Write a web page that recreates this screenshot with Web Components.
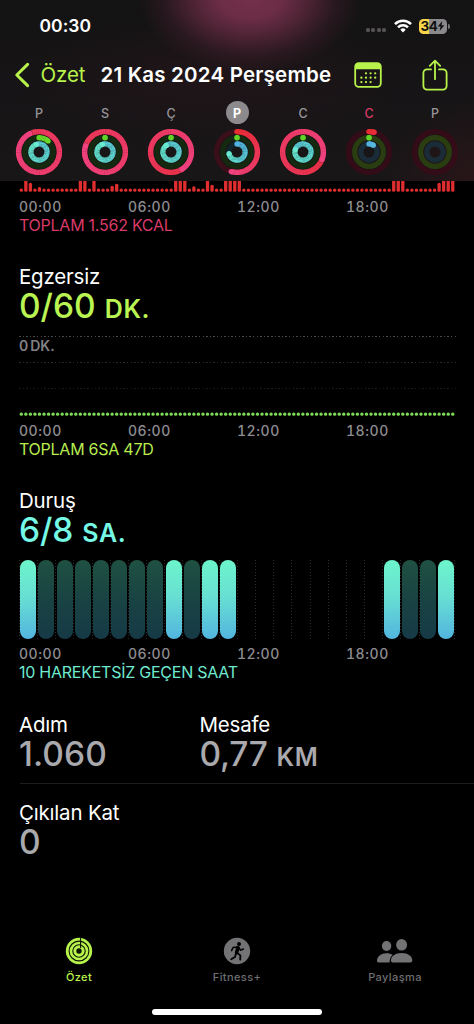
<!DOCTYPE html>
<html lang="tr">
<head>
<meta charset="utf-8">
<meta name="viewport" content="width=device-width, initial-scale=1">
<title>Özet</title>
<style>
    body{
        margin: 0;
        background: #000;
        color: #fff;
        font-family: Inter, "Liberation Sans", sans-serif;
    }
</style>
</head>
<body>
<fitness-app></fitness-app>

<script>
const makeTemplate = (html) => {
    const template = document.createElement('template')
    template.innerHTML = html
    return template
}

class BaseElement extends HTMLElement {
    constructor(){
        super()
        this.attachShadow({ mode: 'open' })
        this.shadowRoot.appendChild(this.constructor.template.content.cloneNode(true))
    }
    $(selector){
        return this.shadowRoot.querySelector(selector)
    }
}

// STATUS BAR
class StatusBar extends BaseElement {
    static template = makeTemplate(`
<style>
    :host{
        display: flex;
        align-items: center;
        height: 52px;
        padding: 0 24.5px 0 39.5px;
        box-sizing: border-box;
    }
    .time{ font-size: 17.5px; font-weight: 600; line-height: 20px; letter-spacing: 0.05px; flex: 1; }
    .signal{ display: flex; gap: 1.5px; margin: 8px 8px 0 0; }
    .signal i{ width: 4px; height: 4px; border-radius: 1.5px; background: #555254; }
    .wifi{ margin-right: 7px; display: block; }
    .battery{
        width: 28px;
        height: 15px;
        border-radius: 4.5px;
        background: linear-gradient(90deg, #f7d548 34%, #8b898b 34%);
        color: #111;
        display: flex;
        align-items: center;
        justify-content: center;
        font-size: 13.5px;
        font-weight: 700;
        letter-spacing: -0.5px;
    }
    .cap{ width: 1.5px; height: 5px; border-radius: 0 2px 2px 0; background: #777577; margin-left: 1px; }
</style>
<span class="time">00:30</span>
<span class="signal"><i></i><i></i><i></i><i></i></span>
<svg class="wifi" width="18" height="14" viewBox="0 0 18 14" fill="none" stroke="#fff" stroke-width="2.6">
    <path d="M1 5.1a11.4 11.4 0 0 1 16 0"/>
    <path d="M4 8.3a7.1 7.1 0 0 1 10 0"/>
    <path d="M9 13.6l-2.7-2.9a3.8 3.8 0 0 1 5.4 0z" fill="#fff" stroke="none"/>
</svg>
<span class="battery">34<svg width="8" height="10" viewBox="0 0 7 10"><path d="M4.8 0L0.2 5.6H3L2.1 10L6.9 4.2H4z" fill="#111"/></svg></span>
<span class="cap"></span>
`)
}

// TOP NAVIGATION
class NavBar extends BaseElement {
    static template = makeTemplate(`
<style>
    :host{
        display: flex;
        align-items: center;
        height: 46px;
        padding: 0 26px 0 14px;
        box-sizing: border-box;
        color: #b8f34b;
    }
    svg{ display: block; fill: none; stroke: currentColor; }
    .back{ font-size: 20.5px; line-height: 26px; width: 60px; margin-left: 10.5px; letter-spacing: -0.1px; }
    .title{ font-size: 20.5px; line-height: 26px; font-weight: 600; color: #fff; flex: 1; white-space: nowrap; letter-spacing: 0.2px; }
    .calendar{ margin-right: 40px; }
</style>
<svg width="16" height="26" viewBox="0 0 16 26" stroke-width="3" stroke-linecap="round" stroke-linejoin="round"><path d="M13.6 2.4L2.8 13L13.6 23.6"/></svg>
<span class="back"><slot name="back"></slot></span>
<span class="title"><slot></slot></span>
<svg class="calendar" width="28" height="26" viewBox="0 0 28 26">
    <rect x="1.2" y="1.2" width="25.6" height="23.6" rx="3.6" stroke-width="1.8"/>
    <path d="M1 7.2V5a4 4 0 0 1 4-4h18a4 4 0 0 1 4 4v2.2z" fill="currentColor" stroke="none"/>
    <g fill="currentColor" stroke="none">
        <circle cx="12" cy="11.3" r="1.15"/><circle cx="16.6" cy="11.3" r="1.15"/><circle cx="21.2" cy="11.3" r="1.15"/>
        <circle cx="7.4" cy="15.7" r="1.15"/><circle cx="12" cy="15.7" r="1.15"/><circle cx="16.6" cy="15.7" r="1.15"/><circle cx="21.2" cy="15.7" r="1.15"/>
        <circle cx="7.4" cy="20.1" r="1.15"/><circle cx="12" cy="20.1" r="1.15"/><circle cx="16.6" cy="20.1" r="1.15"/>
    </g>
</svg>
<svg width="26" height="32" viewBox="0 0 26 32" stroke-width="1.8" stroke-linecap="round" stroke-linejoin="round">
    <path d="M9 10.4H5a3.6 3.6 0 0 0-3.6 3.6v13a3.6 3.6 0 0 0 3.6 3.6h16a3.6 3.6 0 0 0 3.6-3.6V14a3.6 3.6 0 0 0-3.6-3.6h-4"/>
    <path d="M13 20.2V1.8M7.8 6.8L13 1.6l5.2 5.2"/>
</svg>
`)
}

// ONE DAY OF THE WEEK STRIP, rings are fractions of their goal
class DayRings extends BaseElement {
    static template = makeTemplate(`
<style>
    :host{ display: flex; flex-direction: column; align-items: center; color: #98969a; }
    :host([today]){ color: #d93a68; }
    :host([selected]){ color: #fff; }
    .label{
        width: 23px;
        height: 23px;
        border-radius: 50%;
        font-size: 12.5px;
        font-weight: 500;
        line-height: 25px;
        text-align: center;
    }
    :host([selected]) .label{ background: #8c8a8c; font-weight: 700; }
    svg{ display: block; margin-top: 4px; }
</style>
<div class="label"><slot></slot></div>
<svg width="48" height="48" viewBox="-24 -24 48 48"></svg>
`)

    connectedCallback(){
        const idle = this.hasAttribute('idle')
        const rings = [
            { name: 'move', r: 20.4, width: 5.4, from: [232, 44, 52], to: [240, 66, 128], track: idle ? '#340c17' : '#3a0f1a' },
            { name: 'exercise', r: 14.3, width: 5.2, from: [98, 212, 40], to: [140, 230, 50], track: idle ? '#2a3d10' : '#14290f' },
            { name: 'stand', r: 8.1, width: 5.2, from: [82, 178, 226], to: [104, 234, 206], track: idle ? '#1a2c38' : '#10242c' }
        ]
        this.$('svg').innerHTML = rings.map((ring) => {
            const value = Number(this.getAttribute(ring.name) || 0)
            return `<circle r="${ring.r}" fill="none" stroke="${ring.track}" stroke-width="${ring.width}"/>` + this.arc(ring, value)
        }).join('')
    }

    point(r, deg){
        const a = (deg - 90) * Math.PI / 180
        return `${(r * Math.cos(a)).toFixed(2)} ${(r * Math.sin(a)).toFixed(2)}`
    }

    // short segments stepping through the colours, starting at 12 o'clock
    arc(ring, value){
        if(value <= 0) return ''
        const end = value * 360
        const start = Math.max(0, end - 359)
        const color = (deg) => {
            const t = deg / Math.max(end, 200)
            return `rgb(${ring.from.map((c, i) => Math.round(c + (ring.to[i] - c) * t)).join()})`
        }
        let out = ''
        for(let deg = start; deg < end; deg += 6){
            const next = Math.min(end, deg + 7)
            out += `<path d="M${this.point(ring.r, deg)}A${ring.r} ${ring.r} 0 0 1 ${this.point(ring.r, next)}" fill="none" stroke="${color(deg)}" stroke-width="${ring.width}"/>`
        }
        const cap = (deg, r, fill) => `<circle r="${r}" fill="${fill}" transform="translate(${this.point(ring.r, deg)})"/>`
        if(value < 1) out += cap(0, ring.width / 2, color(0))
        if(value > 1 && ring.name === 'move') out += cap(end + 3, ring.width / 2 - 0.4, 'rgba(60, 0, 20, 0.4)')
        return out + cap(end, ring.width / 2, color(end))
    }
}

class HourAxis extends BaseElement {
    static template = makeTemplate(`
<style>
    :host{
        display: grid;
        grid-template-columns: 109px 109px 109px 1fr;
        font-size: 14px;
        font-weight: 500;
        font-variant-numeric: tabular-nums;
        line-height: 18px;
        letter-spacing: 0.55px;
        color: #8d8c90;
        margin-top: 6px;
    }
</style>
<span>00:00</span><span>06:00</span><span>12:00</span><span>18:00</span>
`)
}

// TITLE + VALUE
class MetricValue extends BaseElement {
    static template = makeTemplate(`
<style>
    :host{ display: block; color: #a9a9ae; white-space: nowrap; }
    .title{ font-size: 20.5px; line-height: 24px; color: #fff; letter-spacing: -0.2px; }
    .value{ display: flex; align-items: baseline; height: 32px; font-size: 33.5px; line-height: 34px; font-weight: 450; letter-spacing: var(--value-track, 0.1px); }
    .unit{ font-size: 25px; line-height: 20px; font-weight: 600; letter-spacing: 0.6px; margin-left: 9px; }
</style>
<div class="title"></div>
<div class="value"><slot></slot><span class="unit"></span></div>
`)

    connectedCallback(){
        this.$('.title').textContent = this.getAttribute('heading')
        const unit = this.getAttribute('unit')
        if(unit) this.$('.unit').textContent = unit
        else this.$('.unit').remove()
    }
}

class ChartNote extends BaseElement {
    static template = makeTemplate(`
<style>
    :host{ display: block; font-size: 16px; line-height: 19px; white-space: nowrap; letter-spacing: -0.25px; }
</style>
<slot></slot>
`)
}

// 96 QUARTER HOURS, bars="index:height ..."
class QuarterChart extends BaseElement {
    static template = makeTemplate(`
<style>
    :host{ display: block; overflow: hidden; }
    svg{ display: block; }
</style>
<svg width="437" fill="currentColor"></svg>
`)

    connectedCallback(){
        const height = Number(this.getAttribute('height'))
        const step = 436 / 96
        const bars = {}
        ;(this.getAttribute('bars') || '').split(' ').filter(Boolean).forEach((pair) => {
            const [index, size] = pair.split(':')
            bars[index] = Number(size)
        })
        let out = ''
        for(let i = 0; i < 96; i++){
            const h = bars[i] || 3.2
            out += `<rect x="${(i * step + 0.65).toFixed(2)}" y="${height - h - 0.3}" width="3.3" height="${h}" rx="1.5"/>`
        }
        const svg = this.$('svg')
        svg.setAttribute('height', height)
        svg.innerHTML = out
    }
}

// 24 HOURS, one letter each: s stood, i idle, - nothing
class StandChart extends BaseElement {
    static template = makeTemplate(`
<style>
    :host{ display: grid; grid-template-columns: repeat(24, 1fr); width: 436px; height: 79.5px; }
    span{
        box-sizing: border-box;
        padding-left: 1.3px;
        background: repeating-linear-gradient(#2a2a2c 0 1px, transparent 1px 3px) left / 1px 100% no-repeat;
    }
    span:last-child{
        background: repeating-linear-gradient(#2a2a2c 0 1px, transparent 1px 3px) right / 1px 100% no-repeat;
    }
    i{ display: block; width: 16px; height: 100%; border-radius: 8px; }
    .s{ background: linear-gradient(175deg, #6cf5cb, #68e0d2 45%, #52b4df); }
    .i{ background: linear-gradient(#1f5142, #194343 50%, #163a46); }
</style>
`)

    connectedCallback(){
        for(const hour of this.getAttribute('hours')){
            const cell = document.createElement('span')
            if(hour !== '-') cell.innerHTML = `<i class="${hour}"></i>`
            this.shadowRoot.appendChild(cell)
        }
    }
}

class TabItem extends BaseElement {
    static template = makeTemplate(`
<style>
    :host{
        display: flex;
        flex-direction: column;
        align-items: center;
        color: #6f6f72;
        font-size: 11px;
        font-weight: 500;
        line-height: 14px;
        letter-spacing: 0.4px;
    }
    :host([active]){ color: #b8f34b; }
    .icon{ display: flex; height: 28px; align-items: center; margin-bottom: 5px; }
</style>
<span class="icon"><slot name="icon"></slot></span>
<span><slot></slot></span>
`)
}

class FitnessApp extends BaseElement {
    static template = makeTemplate(`
<style>
    :host{ display: flex; flex-direction: column; height: 1024px; width: 474px; overflow: hidden; background: #000; }
    header{
        height: 181px;
        background:
            radial-gradient(ellipse 112px 74px at 250px -2px, #74304b 0, rgba(112, 46, 72, 0.95) 28%, rgba(100, 42, 65, 0.7) 52%, rgba(80, 34, 52, 0.32) 77%, rgba(60, 26, 40, 0) 100%),
            radial-gradient(ellipse 90px 80px at 474px 181px, #281518, transparent),
            radial-gradient(ellipse 200px 60px at 210px 80px, #201519, transparent),
            linear-gradient(#141314, #191618);
    }
    .week{ display: grid; grid-template-columns: repeat(7, 1fr); padding: 0 6px; margin-top: 3px; }
    main{ flex: 1; padding: 0 19px; }
    .move{ color: #e02e30; }
    .move-note{ color: #d93a68; }
    .exercise{ color: #b9f452; margin-top: 30px; --value-track: 0px; }
    .exercise-plot{ position: relative; height: 79.5px; margin-top: 15px; color: #7ed957; display: flex; flex-direction: column; }
    .line{ height: 1px; margin: 0 -1px 25px 0; background: repeating-linear-gradient(90deg, var(--dots) 0 1.5px, transparent 1.5px 3.6px); }
    .line-label{ position: absolute; top: 1px; left: 0; font-size: 14px; font-weight: 600; line-height: 18px; color: #828186; word-spacing: -1.5px; }
    .exercise-plot quarter-chart{ margin-top: -3.5px; }
    .stand{ color: #76f8e6; margin-top: 30px; --value-track: -0.1px; }
    .stand-note{ color: #6fe9cf; }
    stand-chart{ margin-top: 15px; }
    .stats{ display: grid; grid-template-columns: 180.5px 1fr; margin-top: 30.5px; }
    .distance{ --value-track: -0.3px; }
    .rule{ height: 1px; background: #1d1d1f; margin: 14.5px -19px 17px 1px; }
    footer{ display: grid; grid-template-columns: repeat(3, 1fr); height: 72px; }
    .home{ width: 170px; height: 6px; border-radius: 3px; background: #fff; margin: 0 auto 9px; }
</style>
<header>
    <status-bar></status-bar>
    <nav-bar><span slot="back">Özet</span>21 Kas 2024 Perşembe</nav-bar>
    <div class="week">
        <day-rings move="1.925" exercise="0.11" stand="1.95">P</day-rings>
        <day-rings move="1.8" exercise="0.001" stand="1.95">S</day-rings>
        <day-rings move="1.41" exercise="0.001" stand="1.9">Ç</day-rings>
        <day-rings selected move="0.545" exercise="0.001" stand="0.72">P</day-rings>
        <day-rings move="1.31" exercise="0.001" stand="1.8">C</day-rings>
        <day-rings today idle move="0.04" exercise="0.001" stand="0.09">C</day-rings>
        <day-rings idle>P</day-rings>
    </div>
</header>
<main>
    <quarter-chart class="move" height="11"
        bars="1:14 2:9 4:4.6 13:14 14:14 16:14 20:6 21:8 34:14 35:14 36:14 38:5.5 41:14 42:7 45:14 46:14 47:14 48:14 82:14 83:14 84:14 92:9 93:14 94:14 95:14"></quarter-chart>
    <hour-axis></hour-axis>
    <chart-note class="move-note">TOPLAM 1.562 KCAL</chart-note>

    <metric-value class="exercise" heading="Egzersiz" unit="DK.">0/60</metric-value>
    <div class="exercise-plot">
        <div class="line" style="--dots: #4a4a4c"></div>
        <div class="line" style="--dots: #2a2a2c"></div>
        <div class="line" style="--dots: #1c1c1e"></div>
        <quarter-chart height="5"></quarter-chart>
        <span class="line-label">0 DK.</span>
    </div>
    <hour-axis></hour-axis>
    <chart-note style="color: #b9ec50">TOPLAM 6SA 47D</chart-note>

    <metric-value class="stand" heading="Duruş" unit="SA.">6/8</metric-value>
    <stand-chart hours="siiiiiiisiss--------siis"></stand-chart>
    <hour-axis></hour-axis>
    <chart-note class="stand-note">10 HAREKETSİZ GEÇEN SAAT</chart-note>

    <div class="stats">
        <metric-value heading="Adım">1.060</metric-value>
        <metric-value class="distance" heading="Mesafe" unit="KM">0,77</metric-value>
    </div>
    <div class="rule"></div>
    <metric-value heading="Çıkılan Kat">0</metric-value>
</main>
<footer>
    <tab-item active>
        <svg slot="icon" width="28" height="28" viewBox="-14 -14 28 28">
            <circle r="13.2" fill="#b8f34b"/>
            <g fill="none" stroke="#0c1404" stroke-width="1.1"><circle r="9.9"/><circle r="6.2"/><path d="M1.6 -13.2V-3"/></g>
            <circle r="2.7" fill="#0c1404"/>
        </svg>Özet
    </tab-item>
    <tab-item>
        <svg slot="icon" width="28" height="28" viewBox="-14 -14 28 28">
            <circle r="13.2" fill="#737375"/>
            <circle cx="2" cy="-7" r="2" fill="#000"/>
            <g fill="none" stroke="#000" stroke-linecap="round" stroke-linejoin="round">
                <path d="M0.9 -3.2L-0.4 1.6" stroke-width="3.6"/>
                <path d="M0.6 -4.1L-4 -3.4L-5.4 -0.4" stroke-width="1.5"/>
                <path d="M1.8 -3.6L3.4 -0.8L6.4 -2" stroke-width="1.5"/>
                <path d="M0.2 2L3.4 4.4L3.2 8.6" stroke-width="1.8"/>
                <path d="M-1 2.4L-2 6L-5.8 8.2" stroke-width="1.8"/>
            </g>
        </svg>Fitness+
    </tab-item>
    <tab-item>
        <svg slot="icon" width="38" height="28" viewBox="0 0 38 28" fill="#737375">
            <ellipse cx="10.6" cy="9" rx="4.7" ry="5"/>
            <path d="M1 23.8C1 19.4 5.2 16.2 10.6 16.2C13 16.2 15.2 16.8 16.7 17.8C14.7 19.6 13.5 22.4 13.6 25.4H2.6C1.6 25.4 1 24.8 1 23.8z"/>
            <ellipse cx="25.6" cy="7.8" rx="5.5" ry="5.8"/>
            <path d="M14.9 23.6C14.9 19 19.2 15.9 25.6 15.9C32 15.9 36.3 19 36.3 23.6C36.3 24.8 35.7 25.4 34.3 25.4H16.9C15.5 25.4 14.9 24.8 14.9 23.6z"/>
        </svg>Paylaşma
    </tab-item>
</footer>
<div class="home"></div>
`)
}

customElements.define('status-bar', StatusBar)
customElements.define('nav-bar', NavBar)
customElements.define('day-rings', DayRings)
customElements.define('hour-axis', HourAxis)
customElements.define('metric-value', MetricValue)
customElements.define('chart-note', ChartNote)
customElements.define('quarter-chart', QuarterChart)
customElements.define('stand-chart', StandChart)
customElements.define('tab-item', TabItem)
customElements.define('fitness-app', FitnessApp)
</script>
</body>
</html>
